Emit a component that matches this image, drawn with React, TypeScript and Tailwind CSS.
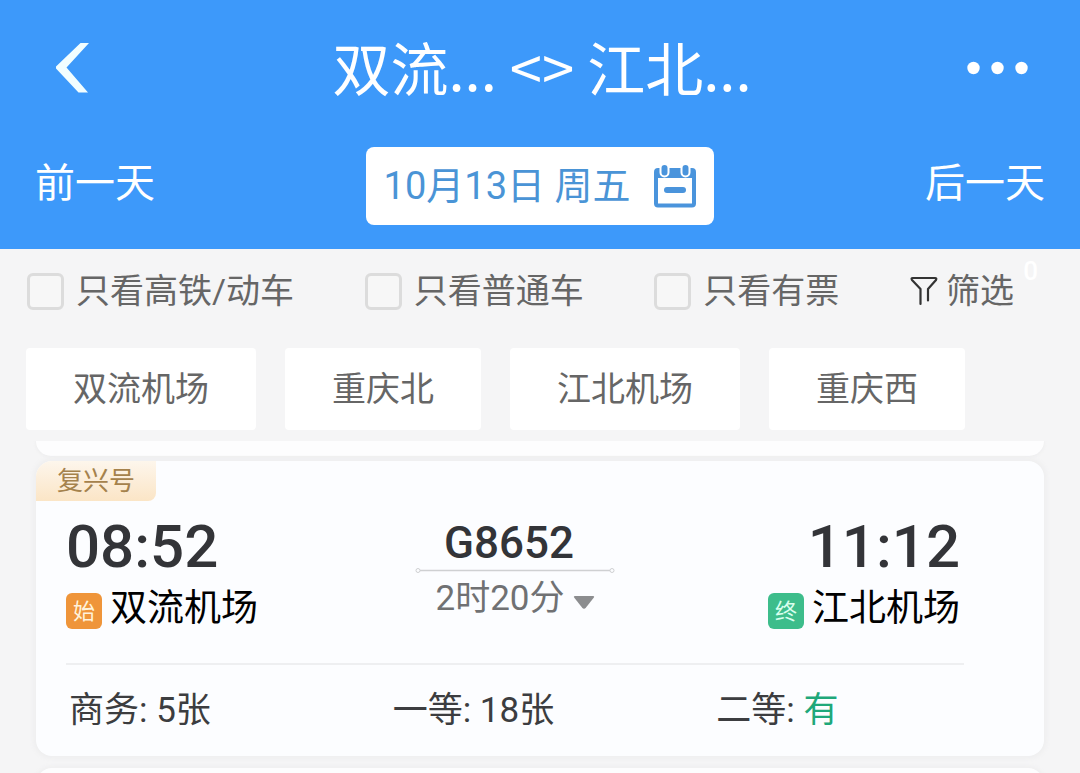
import React, { useState } from 'react';

interface Seat {
  name: string;
  left: string;
  plenty?: boolean;
}

const filterOptions = ['只看高铁/动车', '只看普通车', '只看有票'];

const stations = ['双流机场', '重庆北', '江北机场', '重庆西'];

const seats: Seat[] = [
  { name: '商务', left: '5张' },
  { name: '一等', left: '18张' },
  { name: '二等', left: '有', plenty: true },
];

const CalendarIcon = () => (
  <svg width="42" height="44" viewBox="0 0 42 44" aria-hidden="true">
    <rect x="2" y="6" width="38" height="35.5" rx="2" fill="#fff" stroke="#4a94dc" strokeWidth="4" />
    <path d="M1 5h40v9H1z" fill="#4a94dc" />
    <rect x="6.500" y="0" width="8" height="12.500" rx="4" fill="#4a94dc" stroke="#fff" strokeWidth="2" />
    <rect x="27.500" y="0" width="8" height="12.500" rx="4" fill="#4a94dc" stroke="#fff" strokeWidth="2" />
    <rect x="10" y="23" width="22" height="6" rx="3" fill="#4a94dc" />
  </svg>
);

const FunnelIcon = () => (
  <svg width="28" height="30" viewBox="0 0 28 30" fill="none" stroke="#333" strokeWidth="2.2" strokeLinecap="round" strokeLinejoin="round" aria-hidden="true">
    <path d="M10.500 28V13L2 4Q0.800 2 2.800 2H25Q27 2 26 4L18 13V24.500" />
  </svg>
);

const Header = () => (
  <header className="bg-[#3d99fa] pb-6 text-white">
    <div className="flex h-[147px] items-center justify-between pr-[52px] pb-3 pl-14">
      <button type="button" aria-label="返回" className="w-[61px]">
        <svg width="34" height="50" viewBox="0 0 34 50" fill="#f2feff" aria-hidden="true">
          <path d="M24.500 0H33L10.500 24.500L32 49.500H22.500L0 25.500V23.500Z" />
        </svg>
      </button>
      <h1 className="pb-1 font-['Noto_Sans_CJK_SC',sans-serif] text-[58px] leading-[80px]">双流... &lt;&gt; 江北...</h1>
      <button type="button" aria-label="更多">
        <svg width="61" height="14" viewBox="0 0 61 14" fill="#fff" aria-hidden="true">
          <circle cx="6.500" cy="7" r="6.200" />
          <circle cx="30.500" cy="7" r="6.200" />
          <circle cx="54.500" cy="7" r="6.200" />
        </svg>
      </button>
    </div>
    <div className="flex items-center justify-between px-[35px]">
      <button type="button" className="pb-1 text-[40px] leading-[60px]">前一天</button>
      <button type="button" className="flex h-[78px] items-center justify-between gap-6 rounded-lg bg-white px-[18px] text-[38px] text-[#4a94d6]">
        <span>10月13日 周五</span>
        <CalendarIcon />
      </button>
      <button type="button" className="pb-1 text-[40px] leading-[60px]">后一天</button>
    </div>
  </header>
);

const FilterBar = () => {
  const [checked, setChecked] = useState<string[]>([]);

  const toggle = (option: string) => {
    setChecked(checked.includes(option) ? checked.filter((o) => o !== option) : [...checked, option]);
  };

  return (
    <div className="flex items-center justify-between pt-4 pr-[66px] pl-[27px] text-[34px] leading-[52px] text-[#666]">
      {filterOptions.map((option) => (
        <label key={option} className="flex items-center gap-3">
          <input
            type="checkbox"
            checked={checked.includes(option)}
            onChange={() => toggle(option)}
            className="size-[37px] appearance-none rounded-md border-[3px] border-[#dcdcdc] bg-[#f7f7f7] checked:bg-[#3d99fa]"
          />
          {option}
        </label>
      ))}
      <button type="button" className="relative flex items-center gap-2">
        <FunnelIcon />
        筛选
        <span className="absolute -top-2 -right-6 text-[26px] leading-7 font-medium text-white">0</span>
      </button>
    </div>
  );
};

const StationChips = () => (
  <div className="flex gap-[29px] px-[26px] pt-[31px] pb-[11px]">
    {stations.map((station) => (
      <button key={station} type="button" className="h-[82px] rounded-sm bg-white px-[47px] text-[34px] text-[#666]">
        {station}
      </button>
    ))}
  </div>
);

const TrainCard = () => (
  <article className="overflow-hidden rounded-2xl bg-[#fcfdff] shadow-[0_0_4px_3px_#efeff0]">
    <div className="flex">
      <span className="rounded-br-lg bg-linear-to-b from-[#fdf6ec] to-[#fbe5c6] px-[21px] text-[26px] leading-10 text-[#a5824c]">
        复兴号
      </span>
    </div>

    <div className="mr-20 ml-[30px] flex justify-between border-b-2 border-[#eeeff1] pt-4 pb-[26px]">
      <div>
        <div className="text-[60px] leading-[60px] font-medium text-[#333438]">08:52</div>
        <div className="flex items-center gap-2 pt-1 text-[37px] leading-[56px] text-black">
          <span className="mt-1 size-9 rounded-md bg-[#ef953a] text-center text-[22px] leading-[38px] text-[#fff3dc]">始</span>
          双流机场
        </div>
      </div>

      <div className="flex flex-col items-center pl-1">
        <div className="pr-3 text-[44px] leading-[52px] font-medium text-[#333438]">G8652</div>
        <svg width="200" height="7" viewBox="0 0 200 7" className="-mt-0.5" fill="none" stroke="#cfd0d2" aria-hidden="true">
          <circle cx="3" cy="3.500" r="2" />
          <circle cx="197" cy="3.500" r="2" />
          <path d="M5 3.500H195" strokeWidth="1.500" />
        </svg>
        <button type="button" className="flex items-center gap-2 text-[35px] leading-[50px] text-[#707173]">
          2时20分
          <svg width="22" height="15" viewBox="0 0 22 15" className="mt-1.5" fill="#8c8d8f" aria-hidden="true">
            <path d="M2 1H20Q22 1 20.500 3L13 12.500Q11 15 9 12.500L1.500 3Q0 1 2 1Z" />
          </svg>
        </button>
      </div>

      <div className="pr-1 text-right">
        <div className="text-[60px] leading-[60px] font-medium text-[#333438]">11:12</div>
        <div className="flex items-center gap-2 pt-1 text-[37px] leading-[56px] text-black">
          <span className="mt-1 size-9 rounded-md bg-[#3dbd8b] text-center text-[22px] leading-[38px] text-[#d9ffee]">终</span>
          江北机场
        </div>
      </div>
    </div>

    <div className="grid grid-cols-3 pt-[21px] pr-1 pb-5 pl-[33px] text-[35px] leading-[50px] text-[#3c3d40]">
      {seats.map((seat) => (
        <div key={seat.name}>
          {seat.name}: <span className={seat.plenty ? 'text-[#1fa87a]' : ''}>{seat.left}</span>
        </div>
      ))}
    </div>
  </article>
);

export default function App() {
  return (
    <div className="flex h-screen flex-col overflow-hidden bg-[#f5f5f6] font-[Roboto,'Noto_Sans_CJK_SC',sans-serif]" lang="zh-CN">
      <Header />
      <FilterBar />
      <StationChips />
      <main className="flex min-h-0 flex-1 flex-col overflow-hidden px-9">
        {/* end of the card above */}
        <div className="mb-[5px] h-[15px] shrink-0 rounded-b-2xl bg-[#fdfdfe] shadow-[0_1px_3px_1px_#efeff0]" />
        <div className="shrink-0">
          <TrainCard />
        </div>
        {/* start of the next card */}
        <div className="mt-3 h-20 shrink-0 rounded-t-2xl bg-[#fdfdfe] shadow-[0_0_4px_2px_#efeff0]" />
      </main>
    </div>
  );
}
